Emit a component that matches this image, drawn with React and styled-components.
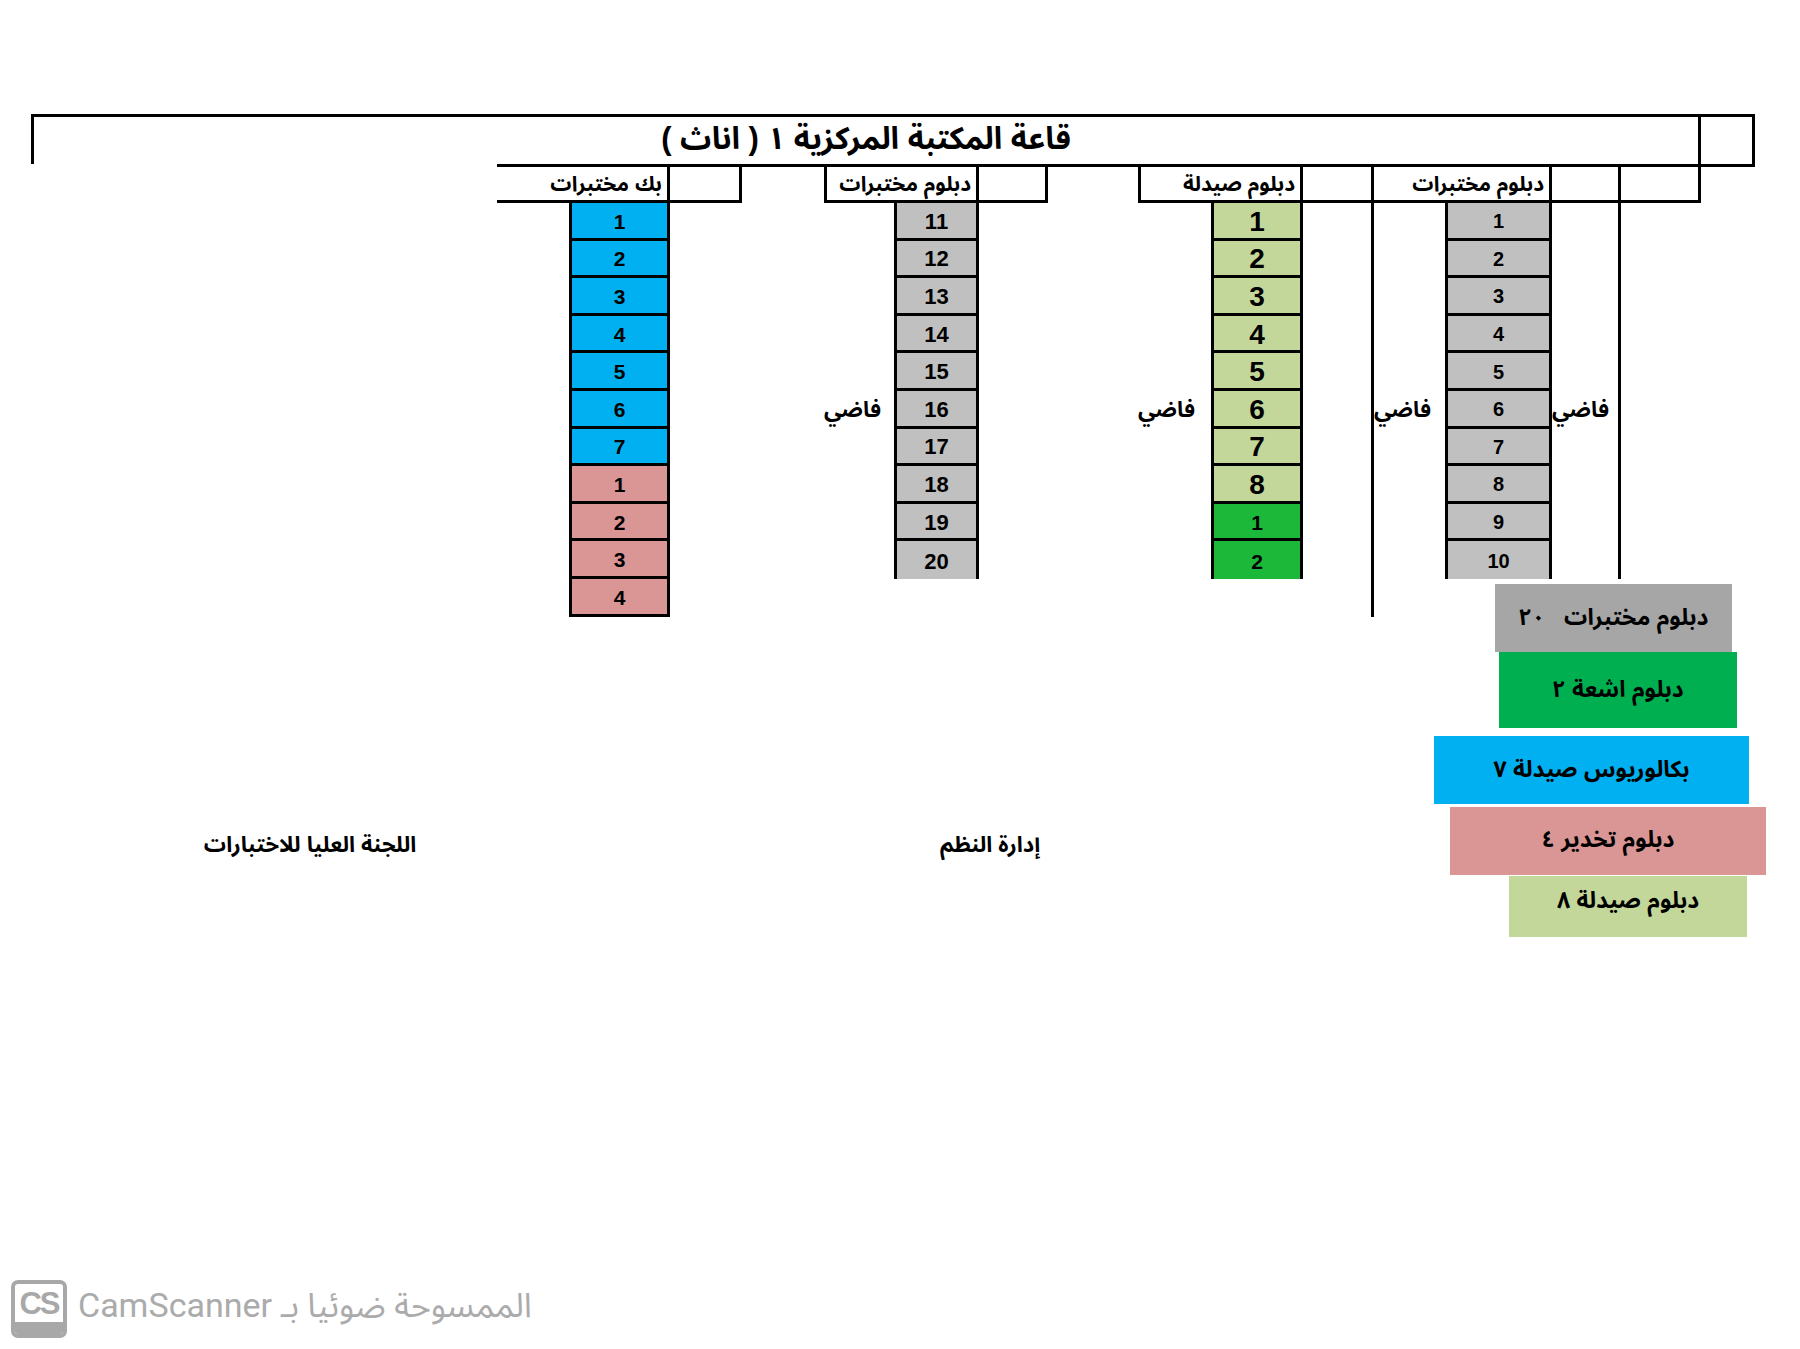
import React from 'react';
import styled, { createGlobalStyle } from 'styled-components';

const GlobalStyle = createGlobalStyle`
  * { box-sizing: border-box; }
  html, body { margin: 0; padding: 0; background: #fff; }
  body {
    font-family: "Liberation Sans", "Noto Sans Arabic", "DejaVu Sans", sans-serif;
    color: #000;
  }
`;

// spreadsheet column widths, left to right
const COLS = [466, 72, 101, 72, 82, 70, 85, 69, 90, 73, 92, 71, 71, 107, 69, 80, 54];
const ROW = 37.6;
const LINE = '3px solid #000';

const BLUE = '#00b0f0';
const PINK = '#da9694';
const GREY = '#c0c0c0';
const SAGE = '#c4d79b';
const GREEN = '#1cb83a';

const Page = styled.div`
  min-height: 100vh;
  display: flex;
  flex-direction: column;
  padding: 114px 0 7px 0;
`;

const Sheet = styled.div`
  margin-left: 31px;
  display: grid;
  grid-template-columns: ${COLS.map((c) => c + 'px').join(' ')};
  grid-template-rows: 50px 39px repeat(11, ${ROW}px) auto;
  font-weight: bold;
`;

const TitleCell = styled.div`
  grid-column: 1 / 17;
  grid-row: 1;
  border: ${LINE};
  border-bottom: none;
  display: flex;
  align-items: center;
  justify-content: center;
  direction: rtl;
  font-size: 31px;
  padding-bottom: 4px;
`;

const TitleEnd = styled.div`
  grid-column: 17;
  grid-row: 1;
  border-top: ${LINE};
  border-right: ${LINE};
`;

const HeadCell = styled.div`
  grid-column: ${(p) => p.$col};
  grid-row: 2;
  border-top: ${LINE};
  border-bottom: ${(p) => (p.$open ? 'none' : LINE)};
  border-left: ${(p) => (p.$left ? LINE : 'none')};
  border-right: ${(p) => (p.$right ? LINE : 'none')};
  direction: rtl;
  display: flex;
  align-items: center;
  padding-right: 5px;
  font-size: 21px;
  white-space: nowrap;
`;

const DataColumn = styled.div`
  grid-column: ${(p) => p.$col};
  grid-row: 3 / span ${(p) => p.$rows};
  display: flex;
  flex-direction: column;
`;

const Cell = styled.div`
  height: ${ROW}px;
  flex: none;
  background: ${(p) => p.$bg};
  border-left: ${LINE};
  border-right: ${LINE};
  border-bottom: ${(p) => (p.$open ? 'none' : LINE)};
  display: flex;
  align-items: center;
  justify-content: center;
  padding-top: 3px;
  font-size: ${(p) => p.$size}px;
`;

const Divider = styled.div`
  grid-column: ${(p) => p.$col};
  grid-row: 3 / span ${(p) => p.$rows};
  border-right: ${LINE};
`;

const Note = styled.div`
  grid-column: ${(p) => p.$col};
  grid-row: 8;
  display: flex;
  align-items: center;
  justify-content: flex-end;
  padding-right: 9px;
  font-size: 22px;
  direction: rtl;
`;

const Legend = styled.div`
  grid-column: 13 / 18;
  grid-row: 13 / 15;
  padding-top: 5px;
  display: flex;
  flex-direction: column;
  align-items: flex-start;
`;

const LegendBox = styled.div`
  flex: none;
  margin-left: ${(p) => p.$x}px;
  margin-top: ${(p) => p.$gap}px;
  width: ${(p) => p.$w}px;
  height: ${(p) => p.$h}px;
  padding-bottom: ${(p) => p.$lift}px;
  background: ${(p) => p.$bg};
  display: flex;
  align-items: center;
  justify-content: center;
  direction: rtl;
  font-size: 23px;
  white-space: pre;
`;

const Signatures = styled.div`
  grid-column: 1 / 12;
  grid-row: 14;
  align-self: start;
  padding-top: 213px;
  display: grid;
  grid-template-columns: 558px 802px;
  font-size: 22px;
  line-height: 30px;
`;

const Signature = styled.div`
  text-align: center;
  direction: rtl;
`;

const Watermark = styled.div`
  margin-top: auto;
  margin-left: 11px;
  display: flex;
  align-items: center;
  gap: 11px;
  color: #ababab;
`;

const CsLogo = styled.div`
  width: 56px;
  height: 58px;
  border: 4px solid #a8a8a8;
  border-radius: 7px;
  display: flex;
  flex-direction: column;
  overflow: hidden;
`;

const CsLetters = styled.div`
  flex: 1;
  display: flex;
  align-items: center;
  justify-content: center;
  font-family: "Liberation Sans", sans-serif;
  font-weight: bold;
  font-size: 31px;
  letter-spacing: -2px;
  padding-top: 2px;
  color: #a8a8a8;
`;

const CsBand = styled.div`
  height: 13px;
  background: #a8a8a8;
`;

const WatermarkText = styled.span`
  direction: rtl;
  font-family: Roboto, "Noto Sans Arabic", "DejaVu Sans", sans-serif;
  font-size: 34px;
  margin-top: -6px;
`;

const headers = [
  { col: '2 / 4', text: 'بك مختبرات', right: true },
  { col: '4', right: true },
  { col: '5', open: true },
  { col: '6 / 8', text: 'دبلوم مختبرات', left: true, right: true },
  { col: '8', right: true },
  { col: '9', open: true },
  { col: '10 / 12', text: 'دبلوم صيدلة', left: true, right: true },
  { col: '12', right: true },
  { col: '13 / 15', text: 'دبلوم مختبرات', right: true },
  { col: '15', right: true },
  { col: '16', right: true },
  { col: '17', open: true },
];

const range = (a, b) => Array.from({ length: b - a + 1 }, (_, i) => a + i);

const columns = [
  {
    col: '3',
    closed: true,
    cells: [
      ...range(1, 7).map((n) => ({ n, bg: BLUE, size: 21 })),
      ...range(1, 4).map((n) => ({ n, bg: PINK, size: 21 })),
    ],
  },
  { col: '7', cells: range(11, 20).map((n) => ({ n, bg: GREY, size: 22 })) },
  {
    col: '11',
    cells: [
      ...range(1, 8).map((n) => ({ n, bg: SAGE, size: 28 })),
      ...range(1, 2).map((n) => ({ n, bg: GREEN, size: 21 })),
    ],
  },
  { col: '14', cells: range(1, 10).map((n) => ({ n, bg: GREY, size: 20 })) },
];

const legend = [
  { text: 'دبلوم مختبرات   ٢٠', bg: '#a6a6a6', x: 121, w: 237, h: 68, gap: 0, lift: 0 },
  { text: 'دبلوم اشعة ٢', bg: '#00b050', x: 125, w: 238, h: 76, gap: 0, lift: 0 },
  { text: 'بكالوريوس صيدلة ٧', bg: BLUE, x: 60, w: 315, h: 68, gap: 8, lift: 0 },
  { text: 'دبلوم تخدير ٤', bg: PINK, x: 76, w: 316, h: 68, gap: 3, lift: 2 },
  { text: 'دبلوم صيدلة ٨', bg: SAGE, x: 135, w: 238, h: 61, gap: 1, lift: 12 },
];

const App = () => (
  <Page>
    <GlobalStyle />
    <Sheet>
      <TitleCell>قاعة المكتبة المركزية ١ ( اناث )</TitleCell>
      <TitleEnd />

      {headers.map((h, i) => (
        <HeadCell key={i} $col={h.col} $left={h.left} $right={h.right} $open={h.open}>
          {h.text}
        </HeadCell>
      ))}

      {columns.map((c) => (
        <DataColumn key={c.col} $col={c.col} $rows={c.cells.length}>
          {c.cells.map((cell, i) => (
            <Cell
              key={i}
              $bg={cell.bg}
              $size={cell.size}
              $open={!c.closed && i === c.cells.length - 1}
            >
              {cell.n}
            </Cell>
          ))}
        </DataColumn>
      ))}

      <Divider $col="12" $rows={11} />
      <Divider $col="15" $rows={10} />

      <Note $col="6">فاضي</Note>
      <Note $col="10">فاضي</Note>
      <Note $col="13">فاضي</Note>
      <Note $col="15">فاضي</Note>

      <Legend>
        {legend.map((l) => (
          <LegendBox
            key={l.text}
            $bg={l.bg}
            $x={l.x}
            $w={l.w}
            $h={l.h}
            $gap={l.gap}
            $lift={l.lift}
          >
            {l.text}
          </LegendBox>
        ))}
      </Legend>

      <Signatures>
        <Signature>اللجنة العليا للاختبارات</Signature>
        <Signature>إدارة النظم</Signature>
      </Signatures>
    </Sheet>

    <Watermark>
      <CsLogo>
        <CsLetters>CS</CsLetters>
        <CsBand />
      </CsLogo>
      <WatermarkText>الممسوحة ضوئيا بـ CamScanner</WatermarkText>
    </Watermark>
  </Page>
);

export default App;
